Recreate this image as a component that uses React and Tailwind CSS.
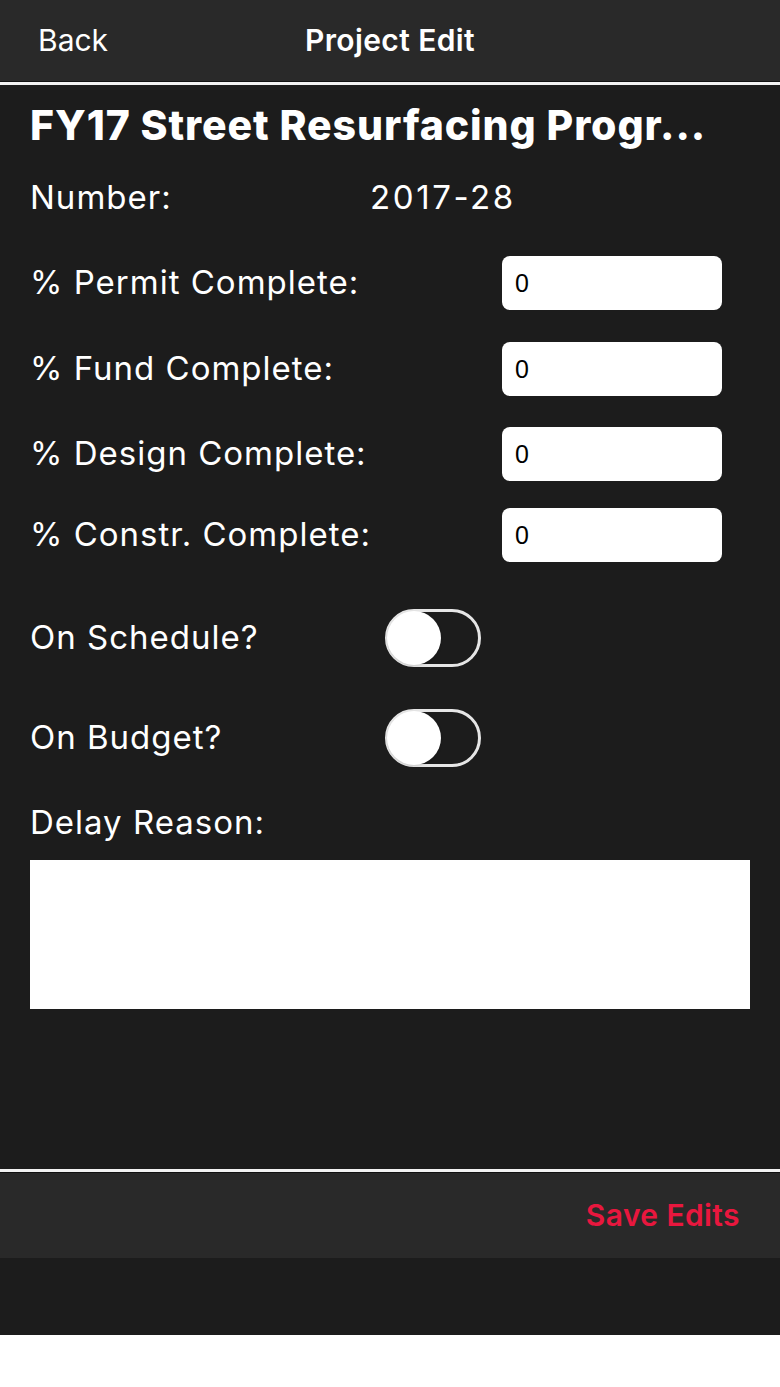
import React, { useState } from 'react';

// iOS-style switch, drawn off by default
function Toggle({ on, onChange }) {
  return (
    <button
      type="button"
      onClick={() => onChange(!on)}
      className={`relative h-[58px] w-[96px] rounded-full border-[3px] ${on ? 'border-[#4cd964] bg-[#4cd964]' : 'border-[#e6e6e6] bg-transparent'}`}
    >
      <span
        className={`absolute top-[-1px] h-[54px] w-[54px] rounded-full bg-white shadow ${on ? 'right-[-1px]' : 'left-[-1px]'}`}
      />
    </button>
  );
}

const fields = [
  { key: 'permit', label: '% Permit Complete:', mt: 'mt-[35px]' },
  { key: 'fund', label: '% Fund Complete:', mt: 'mt-[32px]' },
  { key: 'design', label: '% Design Complete:', mt: 'mt-[31px]' },
  { key: 'constr', label: '% Constr. Complete:', mt: 'mt-[27px]' },
];

export default function App() {
  const [values, setValues] = useState({ permit: '0', fund: '0', design: '0', constr: '0' });
  const [onSchedule, setOnSchedule] = useState(false);
  const [onBudget, setOnBudget] = useState(false);
  const [reason, setReason] = useState('');

  return (
    <div className="flex min-h-[1387px] w-[780px] flex-col bg-white text-white" style={{ fontFamily: 'Inter, Roboto, "Noto Sans", sans-serif' }}>
      <div className="bg-[#1c1c1c]">
        {/* nav bar */}
        <div className="relative flex h-[81px] items-center bg-[#292929] px-[38px]">
          <button type="button" className="text-[30px] font-normal">Back</button>
          <div className="pointer-events-none absolute left-0 right-0 text-center text-[30px] font-semibold tracking-[0.4px]">Project Edit</div>
        </div>
        <div className="h-[1px] bg-[#111]" />
        <div className="h-[3px] bg-[#f2f2f2]" />

        <div className="flex h-[1084px] flex-col px-[30px]">
          <h1 className="mt-[16px] truncate text-[41px] font-extrabold leading-[48px] tracking-[0.9px]">
            FY17 Street Resurfacing Progr...
          </h1>

          <div className="mt-[26px] flex h-[46px] items-center text-[33px] tracking-[1px]">
            <span className="w-[340px]">Number:</span>
            <span className="tracking-[2.6px]">2017-28</span>
          </div>

          {fields.map((f) => (
            <div key={f.key} className={`${f.mt} flex h-[54px] items-center text-[33px]`}>
              <span className="w-[472px] tracking-[1px]">{f.label}</span>
              <input
                value={values[f.key]}
                onChange={(e) => setValues({ ...values, [f.key]: e.target.value })}
                className="h-[54px] w-[220px] rounded-[8px] bg-white px-[13px] text-[25px] text-black outline-none"
                style={{ fontFamily: '"Liberation Sans", Arial, sans-serif' }}
              />
            </div>
          ))}

          <div className="mt-[47px] flex h-[58px] items-center text-[33px] tracking-[1px]">
            <span className="w-[355px]">On Schedule?</span>
            <Toggle on={onSchedule} onChange={setOnSchedule} />
          </div>

          <div className="mt-[42px] flex h-[58px] items-center text-[33px] tracking-[1px]">
            <span className="w-[355px]">On Budget?</span>
            <Toggle on={onBudget} onChange={setOnBudget} />
          </div>

          <div className="mt-[36px] flex h-[40px] items-center text-[33px] tracking-[1px]">Delay Reason:</div>

          <textarea
            value={reason}
            onChange={(e) => setReason(e.target.value)}
            className="mt-[17px] h-[149px] w-[720px] resize-none bg-white p-2 text-[22px] text-black outline-none"
          />
        </div>

        <div className="h-[3px] bg-[#f2f2f2]" />
        <div className="h-[1px] bg-[#111]" />

        {/* bottom toolbar */}
        <div className="flex h-[85px] items-center justify-end bg-[#292929] px-[40px]">
          <button type="button" className="text-[30px] font-semibold tracking-[0.4px] text-[#e8173e]">Save Edits</button>
        </div>
        <div className="h-[77px] bg-[#1c1c1c]" />
      </div>
    </div>
  );
}
